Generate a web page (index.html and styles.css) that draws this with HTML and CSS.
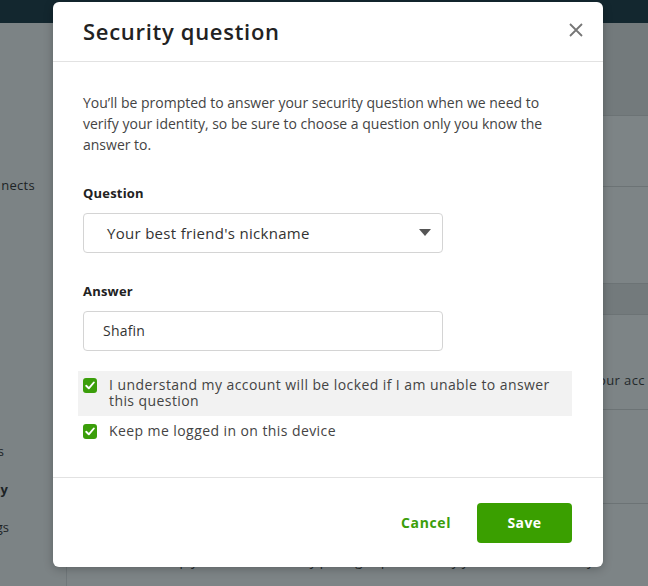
FILE: index.html
```html
<!DOCTYPE html>
<html lang="en">
<head>
<meta charset="utf-8">
<title>Security question</title>
<link rel="stylesheet" href="styles.css">
</head>
<body>
<div class="page">
  <header class="topbar"></header>
  <div class="app">
    <nav class="sidebar">
      <div class="nav-item nav-first">nects</div>
      <div class="nav-item nav-s">s</div>
      <div class="nav-item nav-bold">y</div>
      <div class="nav-item">gs</div>
    </nav>
    <main class="main">
      <div class="band band-a"></div>
      <div class="card card-1"></div>
      <div class="card card-2"></div>
      <div class="band band-b"></div>
      <div class="card card-3"><span class="card-text">our acc</span></div>
      <div class="card card-4"></div>
      <div class="card card-5"><span class="under-text">Keep your account safe by picking a question only you can answer easily</span></div>
    </main>
  </div>
</div>

<div class="modal" role="dialog" aria-labelledby="modal-title">
  <div class="modal-header">
    <h1 class="modal-title" id="modal-title">Security question</h1>
    <button class="close-btn" aria-label="Close">
      <svg width="14" height="14" viewBox="0 0 14 14"><path d="M1 1L13 13M13 1L1 13" stroke="#767676" stroke-width="1.8" fill="none"/></svg>
    </button>
  </div>
  <div class="modal-body">
    <p class="intro">You’ll be prompted to answer your security question when we need to verify your identity, so be sure to choose a question only you know the answer to.</p>
    <label class="field-label">Question</label>
    <div class="select">
      <span class="select-text">Your best friend's nickname</span>
      <svg class="caret" width="12" height="7" viewBox="0 0 12 7"><path d="M0 0H12L6 7Z" fill="#555"/></svg>
    </div>
    <label class="field-label field-label-answer">Answer</label>
    <div class="input">Shafin</div>
    <div class="check-row check-row-hl">
      <span class="checkbox"><svg width="10" height="9" viewBox="0 0 10 9"><path d="M1.2 4.8L3.8 7.3L8.8 1.5" stroke="#fff" stroke-width="1.9" fill="none" stroke-linecap="round" stroke-linejoin="round"/></svg></span>
      <span class="check-text">I understand my account will be locked if I am unable to answer this question</span>
    </div>
    <div class="check-row">
      <span class="checkbox"><svg width="10" height="9" viewBox="0 0 10 9"><path d="M1.2 4.8L3.8 7.3L8.8 1.5" stroke="#fff" stroke-width="1.9" fill="none" stroke-linecap="round" stroke-linejoin="round"/></svg></span>
      <span class="check-text">Keep me logged in on this device</span>
    </div>
  </div>
  <div class="modal-footer">
    <button class="btn-cancel">Cancel</button>
    <button class="btn-save">Save</button>
  </div>
</div>
</body>
</html>
```
FILE: styles.css
```css
* { box-sizing: border-box; }
html, body { margin: 0; padding: 0; }
body {
  width: 648px;
  height: 586px;
  overflow: hidden;
  font-family: "Open Sans", "Liberation Sans", sans-serif;
  background: #7c8385;
  position: relative;
}
.page { display: flex; flex-direction: column; height: 586px; }
.topbar { height: 23px; background: #13272f; flex: none; }
.app { flex: 1; display: flex; }
.sidebar {
  width: 67px;
  flex: none;
  border-right: 1px solid #70777a;
  display: flex;
  flex-direction: column;
  align-items: flex-end;
  color: #1c2326;
  font-size: 13px;
}
.nav-item { line-height: 18px; margin-right: 31px; }
.nav-first { margin-top: 153px; margin-right: 31px; letter-spacing: 0.3px; }
.nav-s { margin-top: 248px; margin-right: 62px; }
.nav-bold { font-weight: 700; margin-top: 20px; margin-right: 58px; }
.sidebar .nav-item:last-child { margin-top: 20px; margin-right: 57px; }
.main { flex: 1; display: flex; flex-direction: column; }
.band { background: #737a7c; }
.band-a { height: 93px; border-bottom: 1px solid #6c7375; }
.band-b { height: 31px; border-bottom: 1px solid #6c7375; }
.card { background: #7d8486; border-bottom: 1px solid #6c7375; position: relative; }
.card-1 { height: 71px; }
.card-2 { height: 97px; }
.card-3 { height: 95px; }
.card-4 { height: 94px; }
.card-5 { flex: 1; border-bottom: 0; }
.card-text {
  position: absolute; left: 531px; top: 56px;
  font-size: 13px; color: #23292b; letter-spacing: 0.4px;
}
.under-text {
  position: absolute; left: 90px; top: 48px;
  font-size: 13px; color: #23292b; white-space: nowrap;
}

.modal {
  position: absolute;
  left: 53px;
  top: 2px;
  width: 550px;
  height: 565px;
  background: #fff;
  border-radius: 6px;
  box-shadow: 0 2px 10px rgba(0,0,0,0.25);
  display: flex;
  flex-direction: column;
  color: #333;
}
.modal-header {
  height: 60px;
  border-bottom: 1px solid #e2e2e2;
  display: flex;
  align-items: center;
  justify-content: space-between;
  padding: 0 17px 0 30px;
  flex: none;
}
.modal-title {
  margin: -2px 0 0;
  font-size: 22px;
  font-weight: 600;
  color: #222;
  letter-spacing: 0.7px;
}
.close-btn {
  border: 0; background: none; padding: 0;
  width: 20px; height: 20px;
  display: flex; align-items: center; justify-content: center;
  margin-top: -3px;
}
.modal-body {
  flex: none;
  height: 416px;
  padding: 30px 31px 0 30px;
  border-bottom: 1px solid #e2e2e2;
  display: flex;
  flex-direction: column;
}
.intro {
  margin: 0 0 30px;
  font-size: 14px;
  line-height: 21px;
  color: #444;
}
.field-label {
  display: block;
  font-size: 13px;
  line-height: 16px;
  font-weight: 700;
  color: #222;
  margin-bottom: 12px;
  letter-spacing: 0.2px;
}
.field-label-answer { margin-top: 30px; margin-bottom: 12px; }
.select, .input {
  width: 360px;
  height: 40px;
  border: 1px solid #d4d4d4;
  border-radius: 4px;
  display: flex;
  align-items: center;
  font-size: 15px;
  color: #333;
}
.select { padding: 0 10px 1px 23px; justify-content: space-between; letter-spacing: 0.3px; }
.caret { margin-right: 1px; }
.input { padding: 0 0 2px 19px; font-size: 14px; letter-spacing: 0.2px; }
.check-row {
  display: flex;
  align-items: flex-start;
  gap: 12px;
  margin: 0 0 0 -5px;
  padding: 7px 5px 7px;
  font-size: 14px;
  line-height: 16px;
  color: #444;
  letter-spacing: 0.42px;
}
.check-row-hl { background: #f2f2f2; margin-top: 20px; margin-bottom: 0; padding: 6px 12px 7px 5px; }
.checkbox {
  flex: none;
  width: 14px; height: 15px;
  margin-top: 1px;
  border-radius: 3px;
  background: #3b9e0a;
  display: flex; align-items: center; justify-content: center;
}
.modal-footer {
  flex: 1;
  display: flex;
  align-items: center;
  justify-content: flex-end;
  padding: 0 31px 0 30px;
  gap: 26px;
}
.btn-cancel {
  border: 0; background: none; padding: 0;
  font-family: inherit;
  font-size: 14px;
  font-weight: 700;
  color: #3b9e0a;
  letter-spacing: 0.6px;
}
.btn-save {
  width: 95px; height: 40px;
  border: 0;
  border-radius: 4px;
  background: #3a9f00;
  color: #fff;
  font-family: inherit;
  font-size: 14px;
  font-weight: 700;
  letter-spacing: 0.4px;
}
```
